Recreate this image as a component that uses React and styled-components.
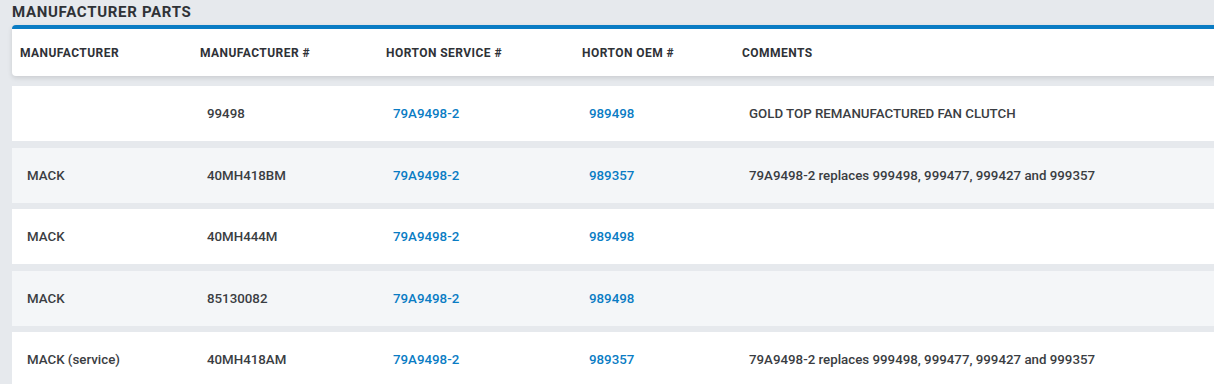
import React from 'react';
import styled, { createGlobalStyle } from 'styled-components';

const GlobalStyle = createGlobalStyle`
  body {
    margin: 0;
    background: #e6e9ed;
    font-family: Roboto, 'Liberation Sans', Arial, sans-serif;
    overflow: hidden;
  }
`;

const Page = styled.div`
  padding: 0 0 0 12px;
  width: 1214px;
  box-sizing: border-box;
`;

const Title = styled.h2`
  margin: 0;
  padding-top: 3px;
  height: 22px;
  font-size: 15px;
  line-height: 18px;
  font-weight: 700;
  letter-spacing: 0.7px;
  color: #2f3237;
`;

const Grid = styled.div`
  display: grid;
  grid-template-columns: 180px 186px 196px 160px 1fr;
  align-items: center;
  margin-right: -10px;
`;

const HeaderRow = styled(Grid)`
  background: #fff;
  border-top: 4px solid #0a7cc4;
  border-radius: 4px;
  height: 51px;
  box-sizing: border-box;
  padding-left: 8px;
  box-shadow: 0 2px 5px rgba(0, 0, 0, 0.12);
  margin-bottom: 10px;
`;

const HeadCell = styled.div`
  font-size: 12px;
  font-weight: 700;
  letter-spacing: 0.45px;
  color: #2f3237;
`;

const Row = styled(Grid)`
  background: ${p => (p.$alt ? '#f4f6f8' : '#fff')};
  height: 55px;
  padding-left: 15px;
  margin-bottom: 6.5px;
`;

const Cell = styled.div`
  font-size: 13.3px;
  font-weight: 500;
  color: #3a3d42;
  white-space: nowrap;
`;

const LinkCell = styled(Cell)`
  color: #0a7cc4;
`;

const rows = [
  { mfr: '', num: '99498', service: '79A9498-2', oem: '989498', comment: 'GOLD TOP REMANUFACTURED FAN CLUTCH' },
  { mfr: 'MACK', num: '40MH418BM', service: '79A9498-2', oem: '989357', comment: '79A9498-2 replaces 999498, 999477, 999427 and 999357' },
  { mfr: 'MACK', num: '40MH444M', service: '79A9498-2', oem: '989498', comment: '' },
  { mfr: 'MACK', num: '85130082', service: '79A9498-2', oem: '989498', comment: '' },
  { mfr: 'MACK (service)', num: '40MH418AM', service: '79A9498-2', oem: '989357', comment: '79A9498-2 replaces 999498, 999477, 999427 and 999357' },
];

export default function App() {
  return (
    <Page>
      <GlobalStyle />
      <Title>MANUFACTURER PARTS</Title>
      <HeaderRow>
        <HeadCell>MANUFACTURER</HeadCell>
        <HeadCell>MANUFACTURER #</HeadCell>
        <HeadCell>HORTON SERVICE #</HeadCell>
        <HeadCell>HORTON OEM #</HeadCell>
        <HeadCell>COMMENTS</HeadCell>
      </HeaderRow>
      {rows.map((r, i) => (
        <Row key={i} $alt={i % 2 === 1}>
          <Cell>{r.mfr}</Cell>
          <Cell>{r.num}</Cell>
          <LinkCell>{r.service}</LinkCell>
          <LinkCell>{r.oem}</LinkCell>
          <Cell>{r.comment}</Cell>
        </Row>
      ))}
    </Page>
  );
}
